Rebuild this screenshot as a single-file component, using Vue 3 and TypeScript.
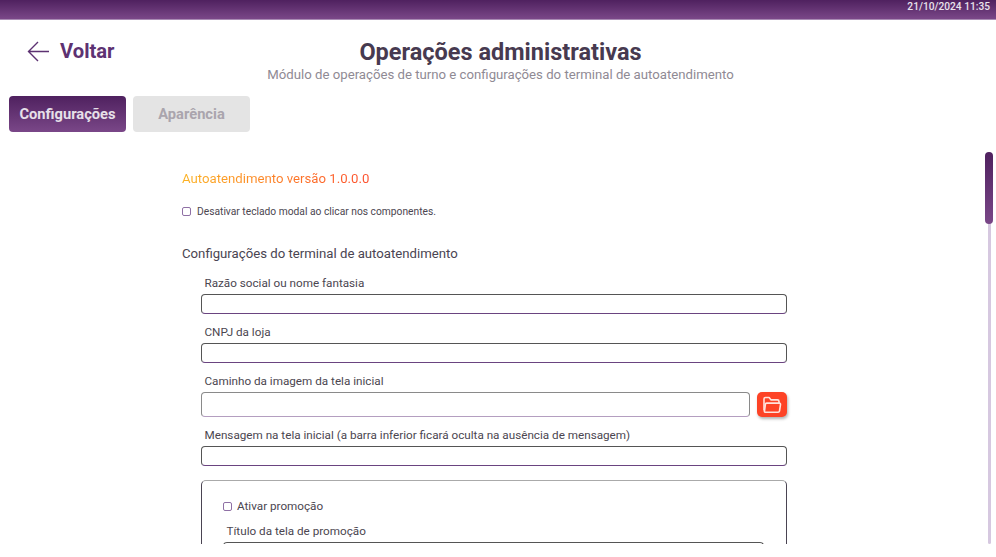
<script setup lang="ts">
const fields = [
  { label: "Razão social ou nome fantasia" },
  { label: "CNPJ da loja" },
  { label: "Caminho da imagem da tela inicial", folder: true },
  { label: "Mensagem na tela inicial (a barra inferior ficará oculta na ausência de mensagem)" },
];
</script>

<template>
  <div class="page">
    <div class="topbar"><span>21/10/2024 11:35</span></div>

    <header class="head">
      <a class="back">
        <svg width="23" height="21" viewBox="0 0 23 21" fill="none" stroke="#5d3272" stroke-width="1.4">
          <path d="M22 10.5H1.5M11 1L1.5 10.5L11 20" />
        </svg>
        Voltar
      </a>
      <div class="titles">
        <h1>Operações administrativas</h1>
        <p>Módulo de operações de turno e configurações do terminal de autoatendimento</p>
      </div>
    </header>

    <nav class="tabs">
      <button class="tab active">Configurações</button>
      <button class="tab">Aparência</button>
    </nav>

    <main class="scroller">
      <div class="content">
        <div class="version">Autoatendimento versão 1.0.0.0</div>
        <label class="check small"><i class="box"></i>Desativar teclado modal ao clicar nos componentes.</label>
        <h2>Configurações do terminal de autoatendimento</h2>

        <div class="fields">
          <div v-for="f in fields" :key="f.label" class="field">
            <label>{{ f.label }}</label>
            <div class="row">
              <input type="text" />
              <button v-if="f.folder" class="folder">
                <svg width="20" height="18" viewBox="0 0 20 18" fill="none" stroke="#ffe3dc" stroke-width="1.6" stroke-linejoin="round">
                  <path d="M2 14.5V3a1.5 1.5 0 0 1 1.5-1.5h3.6l2 2.4h6.4A1.5 1.5 0 0 1 17 5.4V7" />
                  <path d="M2.4 15.6L3.4 8.3a1.3 1.3 0 0 1 1.3-1.2h12.6a1.2 1.2 0 0 1 1.2 1.4l-1 6.6a1.4 1.4 0 0 1-1.4 1.1H3.2a1 1 0 0 1-.8-.6z" />
                </svg>
              </button>
            </div>
          </div>

          <section class="promo">
            <label class="check"><i class="box"></i>Ativar promoção</label>
            <div class="field inner">
              <label>Título da tela de promoção</label>
              <input type="text" />
            </div>
          </section>
        </div>
      </div>
      <div class="track"><div class="thumb"></div></div>
    </main>
  </div>
</template>

<style>
html,
body {
  margin: 0;
  overflow: hidden;
  background: #fff;
}
</style>

<style scoped>
* {
  box-sizing: border-box;
}

.page {
  width: 996px;
  height: 557px;
  display: flex;
  flex-direction: column;
  font-family: Roboto, "Liberation Sans", sans-serif;
  color: #3f3a45;
  background: #fff;
}

.topbar {
  height: 20px;
  flex: none;
  display: flex;
  justify-content: flex-end;
  padding-right: 6px;
  background: linear-gradient(#4f215f, #7a4788);
  border-bottom: 1px solid #a98bb4;
  color: #e9e2ec;
  font-size: 10.2px;
  font-weight: 500;
  line-height: 13px;
}

.head {
  height: 76px;
  flex: none;
  display: flex;
  position: relative;
}

.back {
  position: absolute;
  left: 27px;
  top: 21px;
  display: flex;
  align-items: center;
  gap: 10px;
  font-size: 20.2px;
  font-weight: 700;
  line-height: 21px;
  color: #5d3272;
}

.titles {
  width: 100%;
  padding-top: 18px;
  text-align: center;
  padding-left: 5px;
}

h1 {
  margin: 0;
  font-size: 23.5px;
  font-weight: 700;
  line-height: 28px;
  color: #473a50;
}

p {
  margin: 1px 0 0;
  font-size: 13.2px;
  line-height: 16px;
  color: #8f8a94;
}

.tabs {
  flex: none;
  display: flex;
  gap: 7px;
  padding-left: 9px;
}

.tab {
  width: 117px;
  height: 36px;
  border: 0;
  border-radius: 4px;
  background: #e4e4e4;
  color: #aaa5ad;
  font: 700 14.7px Roboto, "Liberation Sans", sans-serif;
}

.tab.active {
  background: linear-gradient(#4f215f, #7a4788);
  color: #e6e0e9;
}

.scroller {
  position: relative;
  margin-top: 20px;
  height: 392px;
  overflow: hidden;
  flex: none;
}

.content {
  width: 787px;
  padding: 18px 0 0 182px;
}

.version {
  font-size: 13.2px;
  line-height: 18px;
  background: linear-gradient(90deg, #fcb322, #fd4c2c);
  background-clip: text;
  -webkit-background-clip: text;
  color: transparent;
  width: 190px;
  white-space: nowrap;
}

.check {
  display: flex;
  align-items: center;
  gap: 5px;
  font-size: 11.7px;
  line-height: 15px;
  color: #4b4650;
}

.check.small {
  margin-top: 16px;
  gap: 6px;
  font-size: 10.25px;
}

.box {
  width: 9px;
  height: 9px;
  border: 1px solid #8f70a5;
  border-radius: 2px;
  background: #fff;
  flex: none;
}

h2 {
  margin: 26px 0 0;
  font-size: 13.2px;
  font-weight: 400;
  line-height: 18px;
  color: #4a4552;
}

.fields {
  margin: 12px 0 0 19px;
  display: flex;
  flex-direction: column;
}

.field {
  display: flex;
  flex-direction: column;
  margin-bottom: 10px;
}

.field label {
  padding-left: 3.5px;
  font-size: 11.7px;
  line-height: 16px;
  margin-bottom: 3px;
  color: #4b4650;
}

.row {
  display: flex;
  align-items: center;
  gap: 7px;
}

input {
  flex: 1;
  min-width: 0;
  height: 20px;
  padding: 0 4px;
  border: 1px solid #555;
  border-bottom-color: #6a4480;
  border-radius: 4px;
  background: #fff;
  outline: none;
}

.row:has(.folder) input {
  height: 25px;
  border-color: #8a8a8a;
  border-bottom-color: #b49ec0;
}

.folder {
  width: 30px;
  height: 25px;
  flex: none;
  padding: 0;
  border: 0;
  border-radius: 5px;
  background: #fd4326;
  box-shadow: 1px 2px 3px rgba(0, 0, 0, 0.3);
  display: flex;
  align-items: center;
  justify-content: center;
}

.promo {
  height: 120px;
  margin-top: 4px;
  padding: 18px 22px 0 21px;
  border: 1px solid #4a4452;
  border-top-color: #aaa;
  border-radius: 5px;
}

.promo .check {
  margin-bottom: 9px;
}

.field.inner input {
  height: 24px;
}

.track {
  position: absolute;
  left: 988px;
  top: 0;
  bottom: 0;
  width: 3px;
  border-radius: 2px;
  background: #d6c8e0;
}

.thumb {
  position: absolute;
  left: -3px;
  top: 0;
  width: 8px;
  height: 72px;
  border-radius: 4px;
  background: linear-gradient(#4f215f, #7a4788);
}
</style>
